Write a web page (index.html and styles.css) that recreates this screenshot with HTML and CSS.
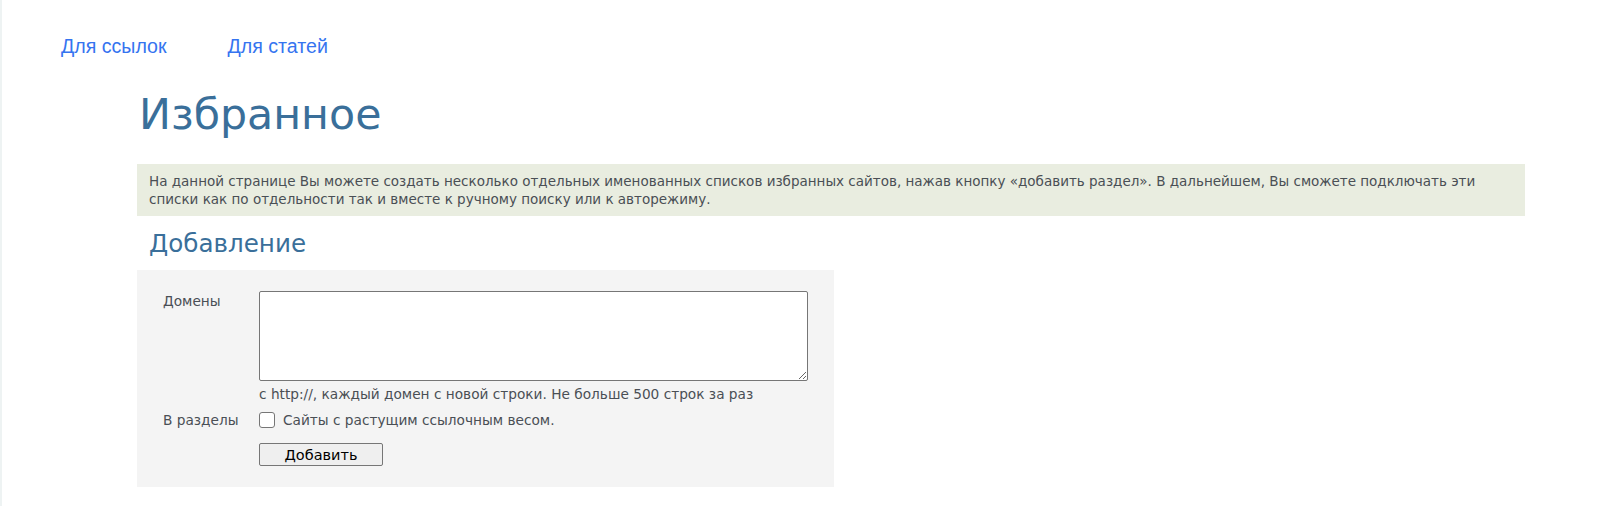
FILE: index.html
```html
<!DOCTYPE html>
<html lang="ru">
<head>
<meta charset="utf-8">
<title>Избранное</title>
<link rel="stylesheet" href="styles.css">
</head>
<body>
<div class="page">
  <nav class="nav">
    <a href="#" class="nav-link">Для ссылок</a>
    <a href="#" class="nav-link">Для статей</a>
  </nav>
  <main class="main">
    <h1 class="title">Избранное</h1>
    <div class="info">На данной странице Вы можете создать несколько отдельных именованных списков избранных сайтов, нажав кнопку «добавить раздел». В дальнейшем, Вы сможете подключать эти списки как по отдельности так и вместе к ручному поиску или к авторежиму.</div>
    <h2 class="subtitle">Добавление</h2>
    <form class="form">
      <label class="label label-domains">Домены</label>
      <div class="field">
        <textarea class="textarea"></textarea>
        <div class="hint">с http://, каждый домен с новой строки. Не больше 500 строк за раз</div>
      </div>
      <span class="label label-sections">В разделы</span>
      <label class="check">
        <span class="checkbox"></span>
        <span>Сайты с растущим ссылочным весом.</span>
      </label>
      <span></span>
      <div class="actions"><button type="button" class="button">Добавить</button></div>
    </form>
  </main>
</div>
</body>
</html>
```

FILE: styles.css
```css
html, body {
  margin: 0;
  padding: 0;
  background: #fff;
}
.page {
  border-left: 2px solid #eef3f3;
  min-height: 506px;
  box-sizing: border-box;
  font-family: "DejaVu Sans", Verdana, sans-serif;
}
.nav {
  display: flex;
  gap: 61px;
  padding: 35px 0 0 59px;
}
.nav-link {
  font-family: "Liberation Sans", Arial, sans-serif;
  color: #3574f0;
  text-decoration: none;
  font-size: 19.6px;
  line-height: 22px;
}
.main {
  margin-left: 135px;
  width: 1388px;
}
.title {
  margin: 30px 0 0 2px;
  font-family: "DejaVu Sans", Verdana, sans-serif;
  font-weight: normal;
  font-size: 42.7px;
  line-height: 55px;
  color: #3a6f9a;
}
.info {
  margin-top: 22px;
  background: #e9ede0;
  padding: 8px 12px;
  font-size: 13.5px;
  line-height: 18px;
  color: #4a4f55;
}
.subtitle {
  margin: 13px 0 11px 12px;
  font-family: "DejaVu Sans", Verdana, sans-serif;
  font-weight: normal;
  font-size: 24.6px;
  line-height: 30px;
  color: #3a6f9a;
}
.form {
  width: 697px;
  background: #f4f4f4;
  display: grid;
  grid-template-columns: 122px 1fr;
  padding: 21px 0 21px;
  font-size: 13.7px;
  line-height: 18px;
  color: #4a4f55;
}
.label {
  padding-left: 26px;
}
.label-domains {
  padding-top: 1px;
}
.label-sections {
  line-height: 20px;
  padding-top: 7px;
}
.field {
  display: flex;
  flex-direction: column;
}
.textarea {
  width: 549px;
  height: 90px;
  box-sizing: border-box;
  margin: 0;
  border: 1px solid #767676;
  border-radius: 2px;
  background: #fff;
  resize: vertical;
  display: block;
}
.hint {
  margin-top: 4px;
}
.check {
  display: flex;
  align-items: center;
  gap: 8px;
  padding-top: 7px;
  line-height: 20px;
}
.checkbox {
  width: 16px;
  height: 16px;
  box-sizing: border-box;
  border: 1px solid #767676;
  border-radius: 3px;
  background: #fff;
  flex: none;
}
.actions {
  padding-top: 13px;
}
.button {
  display: block;
  width: 124px;
  height: 23px;
  margin: 0;
  padding: 0;
  border: 1px solid #767676;
  border-radius: 2px;
  background: #efefef;
  font-family: "DejaVu Sans", Verdana, sans-serif;
  font-size: 14.5px;
  color: #000;
}
```
